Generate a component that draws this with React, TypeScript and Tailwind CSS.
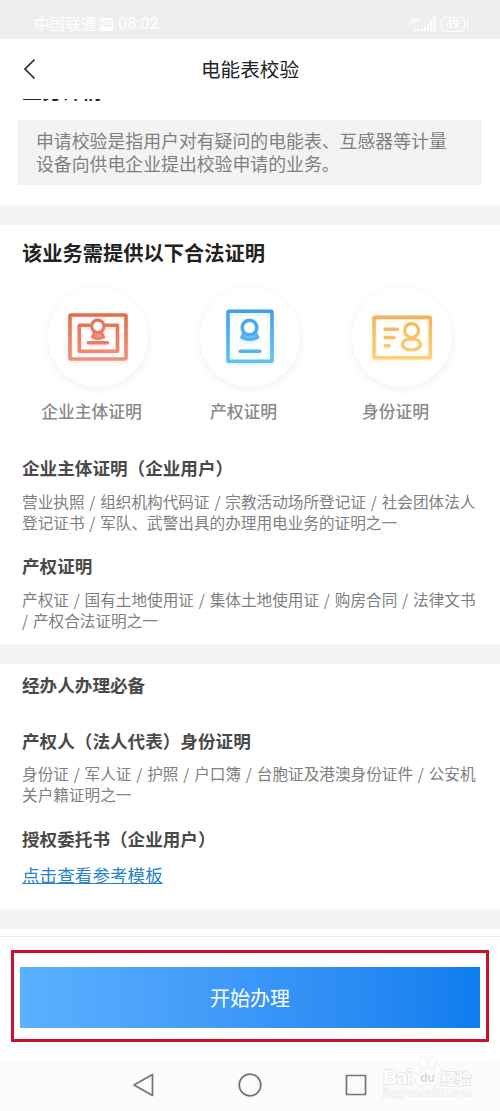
import type { ReactNode } from "react";

function CompanyIcon() {
  return (
    <svg viewBox="0 0 100 100" className="size-full drop-shadow-[0_2px_2px_rgba(230,110,80,0.15)]" fill="none" stroke="url(#company)" strokeWidth="3.6" strokeLinecap="round" strokeLinejoin="round">
      <defs>
        <linearGradient id="company" gradientUnits="userSpaceOnUse" x1="0" y1="26" x2="0" y2="74">
          <stop stopColor="#e36c4e" />
          <stop offset="1" stopColor="#ee927c" />
        </linearGradient>
      </defs>
      <rect x="22" y="28" width="56" height="44" rx="1" />
      <path d="M42 38.200H31.300V64.200H69.500V38.200H58" />
      <path d="M46 46L44.200 50.200Q50 53.500 56 50.200L54 46" fill="#ee927c" strokeWidth="2.4" />
      <circle cx="49.800" cy="39.300" r="6.200" fill="white" strokeWidth="3.2" />
      <path d="M40.300 55.800H59.500" stroke="#e88068" />
    </svg>
  );
}

function PropertyIcon() {
  return (
    <svg viewBox="0 0 100 100" className="size-full -translate-y-px drop-shadow-[0_2px_2px_rgba(70,170,240,0.2)]" fill="none" stroke="url(#property)" strokeWidth="3.6" strokeLinecap="round" strokeLinejoin="round">
      <defs>
        <linearGradient id="property" gradientUnits="userSpaceOnUse" x1="0" y1="24" x2="0" y2="77">
          <stop stopColor="#459fe8" />
          <stop offset="1" stopColor="#5bc3f3" />
        </linearGradient>
      </defs>
      <rect x="28" y="25.200" width="44" height="50" rx="1" />
      <path d="M43.500 47.200L41.500 51.500Q49.500 56 58 51.500L55.500 47.200" fill="#68c5f2" strokeWidth="2.6" />
      <circle cx="49.500" cy="41.600" r="7.300" fill="white" strokeWidth="3.6" />
      <path d="M40.200 65.200H59.600" stroke="#58b2ec" />
    </svg>
  );
}

function IdentityIcon() {
  return (
    <svg viewBox="0 0 100 100" className="size-full drop-shadow-[0_2px_2px_rgba(245,190,90,0.2)]" fill="none" stroke="url(#identity)" strokeWidth="3.6" strokeLinecap="round" strokeLinejoin="round">
      <defs>
        <linearGradient id="identity" gradientUnits="userSpaceOnUse" x1="0" y1="29" x2="0" y2="73">
          <stop stopColor="#f0b55e" />
          <stop offset="1" stopColor="#f9d378" />
        </linearGradient>
      </defs>
      <rect x="22" y="30.400" width="56.300" height="40.400" rx="1" />
      <path d="M33.200 42.200H45.400" stroke="#f1ba64" />
      <path d="M33.200 50.500H41.800" stroke="#f3c069" />
      <path d="M33.200 58.800H37" stroke="#f5c66e" />
      <ellipse cx="59.400" cy="57.400" rx="9" ry="5.600" strokeWidth="3.200" />
      <circle cx="59.600" cy="43.600" r="6.900" fill="white" strokeWidth="3.200" />
    </svg>
  );
}

function StatusBar() {
  return (
    <div className="flex h-[39px] shrink-0 items-center justify-between bg-[#eeeef0] pt-[9px] pr-8 pl-[34px] text-white">
      <div className="flex items-center whitespace-nowrap">
        <span className="text-[15.6px]">中国联通</span>
        <span className="ml-[2.5px] flex h-[13px] w-[14px] items-center justify-center rounded-[3px] bg-white text-[9px] font-bold text-[#eeeef0]">
          HD
        </span>
        <span className="ml-[5px] font-[Roboto] text-[16px] tracking-[0.25px]">08:02</span>
      </div>
      <div className="flex items-center">
        <svg width="27" height="16" viewBox="0 0 27 16" fill="white">
          <text x="0" y="7" fontSize="7" fontWeight="700" fontFamily="Roboto">4G⁺</text>
          <path d="M4 12h1.500v3H4zM7 13h1.500v2H7zM11 13h2v2h-2zM14 10.500h2v4.500h-2zM17 7.500h2v7.500h-2zM20 4.500h2v10.500h-2zM23.500 1h2v14h-2z" />
        </svg>
        <span className="ml-1 flex h-[15px] w-[24px] items-center justify-center rounded-[4px] border-[1.5px] border-white font-[Roboto] text-[12px] leading-none font-medium">
          49
        </span>
        <span className="ml-[2px] h-[7px] w-[1.5px] bg-white" />
      </div>
    </div>
  );
}

const certs = [
  { icon: <CompanyIcon />, label: "企业主体证明" },
  { icon: <PropertyIcon />, label: "产权证明" },
  { icon: <IdentityIcon />, label: "身份证明" },
];

function Heading({ children }: { children: ReactNode }) {
  return <h2 className="text-[17.6px] leading-6 font-bold whitespace-nowrap text-[#4a4a4a]">{children}</h2>;
}

function Detail({ lines }: { lines: string[] }) {
  return (
    <div className="text-[15.63px] leading-[21px] whitespace-nowrap text-[#808080] [word-spacing:1.3px]">
      {lines.map((line) => (
        <p key={line}>{line}</p>
      ))}
    </div>
  );
}

function Divider() {
  return <div className="h-5 shrink-0 bg-[#f4f4f4]" />;
}

function Watermark() {
  return (
    <svg className="absolute top-[-3px] left-[380px]" width="96" height="46" viewBox="0 0 96 46" fill="white" stroke="#e2e2e2" strokeWidth="1.6" paintOrder="stroke">
      <text x="3" y="29.300" fontSize="20" fontWeight="700" fontFamily="Liberation Sans" textLength="29">Bai</text>
      <ellipse cx="37.700" cy="14.500" rx="3" ry="4" strokeWidth="1" />
      <ellipse cx="43.500" cy="7.500" rx="3.500" ry="4.700" strokeWidth="1" />
      <ellipse cx="52" cy="7.500" rx="3.500" ry="4.700" strokeWidth="1" />
      <ellipse cx="57.300" cy="14.800" rx="3" ry="4" strokeWidth="1" />
      <path d="M43 17Q47.500 10.500 52 17L57 22Q60 30 53 30Q47 29 41 30Q33.500 30 36.500 22Z" strokeWidth="1" />
      <text x="40.200" y="27" fontSize="12" fontWeight="700" fontFamily="Liberation Sans" fill="#d6d6d6" stroke="none">du</text>
      <text x="61" y="28.700" fontSize="15" fontWeight="700" fontFamily="Noto Sans CJK SC">经验</text>
      <text x="3" y="41" fontSize="10.500" fontFamily="Liberation Sans" textLength="88.500" stroke="#e8e8e8" strokeWidth="1.200">jingyan.baidu.com</text>
    </svg>
  );
}

export default function App() {
  return (
    <div className="flex h-[1111px] w-[500px] flex-col overflow-hidden bg-white font-['Noto_Sans_CJK_SC',sans-serif]">
      <StatusBar />
      <header className="flex h-[59px] shrink-0 items-center px-[23px] pt-px">
        <svg width="14" height="22" viewBox="0 0 14 22" fill="none" stroke="#2b2b2b" strokeWidth="1.7">
          <path d="M11.500 1.500L2 11L11.500 20.500" />
        </svg>
        <h1 className="flex-1 pr-[14px] text-center text-[19.6px] leading-7 text-[#222]">电能表校验</h1>
      </header>

      {/* section title scrolled under the header */}
      <div className="mt-px flex h-[21px] shrink-0 items-start overflow-hidden pl-[22px]">
        <h2 className="-mt-5 text-[20px] leading-6 font-bold text-[#222]">业务详情</h2>
      </div>
      <div className="mx-[18px] h-[65px] shrink-0 bg-[#f3f3f3] pt-[9px] pl-[18px] text-[17.87px] leading-[23px] whitespace-nowrap text-[#808080]">
        <p>申请校验是指用户对有疑问的电能表、互感器等计量</p>
        <p>设备向供电企业提出校验申请的业务。</p>
      </div>
      <div className="h-5 shrink-0" />
      <Divider />

      <section className="h-[419px] shrink-0 px-[22px] pt-[14px]">
        <h2 className="text-[20.25px] leading-7 font-bold text-[#222]">该业务需提供以下合法证明</h2>
        <div className="mt-5 flex justify-between px-[26px]">
          {certs.map((c) => (
            <div key={c.label} className="flex w-[100px] flex-col items-center">
              <div className="size-[100px] rounded-full bg-white shadow-[0_2px_8px_rgba(0,0,40,0.07)]">{c.icon}</div>
              <p className="mt-3 mr-[13px] text-[16.8px] leading-6 font-medium whitespace-nowrap text-[#8a8a8a]">
                {c.label}
              </p>
            </div>
          ))}
        </div>
        <div className="mt-[33px]">
          <Heading>企业主体证明（企业用户）</Heading>
          <div className="mt-[11px]">
            <Detail
              lines={[
                "营业执照 / 组织机构代码证 / 宗教活动场所登记证 / 社会团体法人",
                "登记证书 / 军队、武警出具的办理用电业务的证明之一",
              ]}
            />
          </div>
        </div>
        <div className="mt-[21px]">
          <Heading>产权证明</Heading>
          <div className="mt-[11px]">
            <Detail
              lines={[
                "产权证 / 国有土地使用证 / 集体土地使用证 / 购房合同 / 法律文书",
                "/ 产权合法证明之一",
              ]}
            />
          </div>
        </div>
      </section>
      <Divider />

      <section className="h-[245px] shrink-0 px-[22px] pt-[9px]">
        <Heading>经办人办理必备</Heading>
        <div className="mt-8">
          <Heading>产权人（法人代表）身份证明</Heading>
          <div className="mt-[10px]">
            <Detail
              lines={[
                "身份证 / 军人证 / 护照 / 户口簿 / 台胞证及港澳身份证件 / 公安机",
                "关户籍证明之一",
              ]}
            />
          </div>
        </div>
        <div className="mt-[22px]">
          <Heading>授权委托书（企业用户）</Heading>
          <a className="mt-3 block text-[17.6px] leading-6 text-[#2a82cc] underline">点击查看参考模板</a>
        </div>
      </section>
      <Divider />

      <footer className="mt-[7px] h-[122px] shrink-0 border-t border-[#ebebeb] px-[11px] pt-[13px]">
        <div className="h-[92px] border-[3px] border-[#cb1229] px-[6px] py-[14px]">
          <button className="h-[61px] w-full bg-linear-to-r from-[#5cb0ff] to-[#0e7def] text-[20px] text-white">
            开始办理
          </button>
        </div>
      </footer>
      <nav className="relative flex flex-1 items-center justify-center bg-[#fbfbfb]">
        <svg width="236" height="26" viewBox="0 0 236 26" fill="none" stroke="#747474" strokeWidth="1.7" strokeLinejoin="round">
          <path d="M20.500 2.500V23.500L2 13Z" />
          <circle cx="118" cy="13" r="10.800" />
          <rect x="214.500" y="3.500" width="19" height="19" />
        </svg>
        <Watermark />
      </nav>
    </div>
  );
}
